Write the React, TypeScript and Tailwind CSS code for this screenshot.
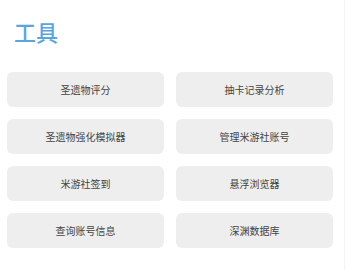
import React from "react";

const items = [
  "圣遗物评分",
  "抽卡记录分析",
  "圣遗物强化模拟器",
  "管理米游社账号",
  "米游社签到",
  "悬浮浏览器",
  "查询账号信息",
  "深渊数据库",
];

export default function App() {
  return (
    <div
      className="w-[353px] h-[270px] bg-white overflow-hidden"
      style={{ fontFamily: '"Noto Sans CJK SC", "Noto Sans", sans-serif' }}
    >
      <div className="w-[345px] h-full border-r border-[#f4f4f4] pl-[7px]">
        <h1 className="pl-[7px] pt-[16px] text-[22px] leading-[30px] font-medium text-[#5aa5de]">
          工具
        </h1>
        <div className="mt-[26px] grid grid-cols-2 gap-x-[12px] gap-y-[12px] w-[326px]">
          {items.map((t) => (
            <div
              key={t}
              className="h-[35px] rounded-[6px] bg-[#eeeeee] flex items-center justify-center text-[10px] text-[#444444]"
            >
              {t}
            </div>
          ))}
        </div>
      </div>
    </div>
  );
}
